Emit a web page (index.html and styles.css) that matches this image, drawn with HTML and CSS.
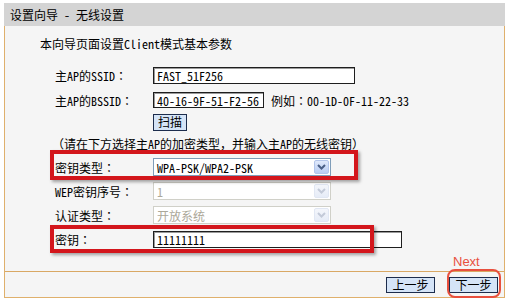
FILE: index.html
```html
<!DOCTYPE html>
<html lang="zh-CN">
<head>
  <meta charset="UTF-8" />
  <title>设置向导 - 无线设置</title>
  <link rel="stylesheet" href="styles.css">
</head>
<body>
  <div class="wizard">
    <div class="title">设置向导 - 无线设置</div>

    <div class="panel">
      <div class="content">
        <p class="intro">本向导页面设置Client模式基本参数</p>

        <div class="row r-ssid">
          <span class="label">主AP的SSID<span class="colon">：</span></span>
          <input class="text ssid" value="FAST_51F256" />
        </div>

        <div class="row r-bssid">
          <span class="label">主AP的BSSID<span class="colon">：</span></span>
          <input class="text bssid" value="40-16-9F-51-F2-56" />
          <span class="hint">例如<span class="colon">：</span>00-1D-0F-11-22-33</span>
        </div>

        <div class="row r-scan">
          <span class="label"></span>
          <button class="btn scan">扫描</button>
        </div>

        <div class="row r-note">
          <span class="note">（请在下方选择主AP的加密类型，并输入主AP的无线密钥）</span>
        </div>

        <div class="row marked">
          <span class="label">密钥类型<span class="colon">：</span></span>
          <div class="select">
            <span class="value">WPA-PSK/WPA2-PSK</span>
            <span class="arrow"><svg width="9" height="6" viewBox="0 0 9 6"><path d="M1 1l3.5 3.5L8 1" /></svg></span>
          </div>
          <span class="mark mark-type"></span>
        </div>

        <div class="row">
          <span class="label">WEP密钥序号<span class="colon">：</span></span>
          <div class="select disabled">
            <span class="value">1</span>
            <span class="arrow"><svg width="9" height="6" viewBox="0 0 9 6"><path d="M1 1l3.5 3.5L8 1" /></svg></span>
          </div>
        </div>

        <div class="row">
          <span class="label">认证类型<span class="colon">：</span></span>
          <div class="select disabled">
            <span class="value">开放系统</span>
            <span class="arrow"><svg width="9" height="6" viewBox="0 0 9 6"><path d="M1 1l3.5 3.5L8 1" /></svg></span>
          </div>
        </div>

        <div class="row marked">
          <span class="label">密钥<span class="colon">：</span></span>
          <input class="text key" value="11111111" />
          <span class="mark mark-key"></span>
        </div>
      </div>

      <div class="footer">
        <button class="btn step">上一步</button>
        <span class="next-wrap">
          <button class="btn step">下一步</button>
          <span class="mark-round"></span>
          <span class="next-note">Next</span>
        </span>
      </div>
    </div>
  </div>
</body>
</html>
```

FILE: styles.css
```css
body {
  margin: 0;
  background: #fff;
  color: #000;
  font-family: "Noto Sans Mono CJK SC", "Noto Sans CJK SC", "Liberation Mono", monospace;
  font-size: 12px;
}

.wizard {
  width: 501px;
  margin: 3px 0 0 4px;
}

.title {
  height: 23px;
  line-height: 23px;
  padding-left: 6px;
  background: #d4d4d4;
}

.panel {
  border: 1px solid #dfb06c;
  border-top: none;
  background: #f5f5f5;
}

.content {
  height: 245px;
  padding-top: 9px;
  box-sizing: border-box;
}

.intro {
  margin: 0 0 10px;
  padding-left: 35px;
  line-height: 18px;
}

.row {
  display: flex;
  align-items: center;
  height: 24px;
}

.r-ssid { height: 25px; }
.r-scan { height: 20px; }
.r-note { height: 23px; }

.marked {
  position: relative;
}

.label {
  flex: none;
  width: 148px;
  padding-left: 50px;
  box-sizing: border-box;
}

/* centred full-width colon, as the old song font draws it */
.colon {
  display: inline-block;
  width: 12px;
  text-align: center;
  font-family: "Noto Sans Mono CJK TC", "Noto Sans CJK TC", sans-serif;
}

.note {
  padding-left: 47px;
}

.hint {
  margin-left: 7px;
}

.text {
  box-sizing: border-box;
  height: 17px;
  padding: 0 3px;
  margin: 0;
  border: 1px solid #1e1e1e;
  box-shadow: inset 1px 1px 0 #9a9a9a;
  background: #fff;
  font: inherit;
  color: #000;
  outline: none;
}

.ssid { width: 202px; }
.bssid { width: 111px; height: 16px; }
.key { width: 249px; }

.btn {
  box-sizing: border-box;
  margin: 0;
  padding: 0;
  border: 1px solid #1c2c4c;
  background: #d5e4f7;
  font: inherit;
  color: #000;
  line-height: 14px;
}

.scan {
  width: 34px;
  height: 17px;
}

.step {
  width: 49px;
  height: 16px;
}

.select {
  display: flex;
  align-items: center;
  box-sizing: border-box;
  width: 178px;
  height: 18px;
  border: 1px solid #7f9db9;
  background: #fff;
}

.select .value {
  flex: 1;
  padding-left: 3px;
}

.select .arrow {
  display: flex;
  align-items: center;
  justify-content: center;
  box-sizing: border-box;
  width: 15px;
  height: 14px;
  margin-right: 1px;
  border: 1px solid #b3c5ea;
  border-radius: 2px;
  background: linear-gradient(#e0e9fb, #b9cdf3);
}

.select .arrow path {
  fill: none;
  stroke: #4a5f86;
  stroke-width: 2;
}

.select.disabled {
  border-color: #d0d0c8;
}

.select.disabled .value {
  color: #aca899;
}

.select.disabled .arrow {
  border-color: #e1e7f3;
  background: linear-gradient(#f4f6fb, #e6ecf7);
}

.select.disabled .arrow path {
  stroke: #c3cad8;
}

.mark {
  position: absolute;
  left: 45px;
  box-sizing: border-box;
  border: 4px solid #d3161c;
  box-shadow: 2px 2px 3px rgba(0, 0, 0, 0.35);
  pointer-events: none;
}

.mark-type {
  top: -5px;
  width: 308px;
  height: 30px;
}

.mark-key {
  top: -2px;
  width: 324px;
  height: 28px;
}

.footer {
  display: flex;
  align-items: center;
  justify-content: flex-end;
  gap: 14px;
  height: 25px;
  padding-right: 6px;
  border-top: 1px solid #d9a864;
}

.next-wrap {
  position: relative;
  display: flex;
}

.mark-round {
  position: absolute;
  left: -2px;
  top: -8px;
  width: 54px;
  height: 29px;
  box-sizing: border-box;
  border: 2px solid #e8503e;
  border-radius: 8px;
}

.next-note {
  position: absolute;
  left: 4px;
  top: -23px;
  font-family: "Liberation Sans", sans-serif;
  font-size: 13px;
  line-height: 15px;
  color: #e8503e;
}
```
